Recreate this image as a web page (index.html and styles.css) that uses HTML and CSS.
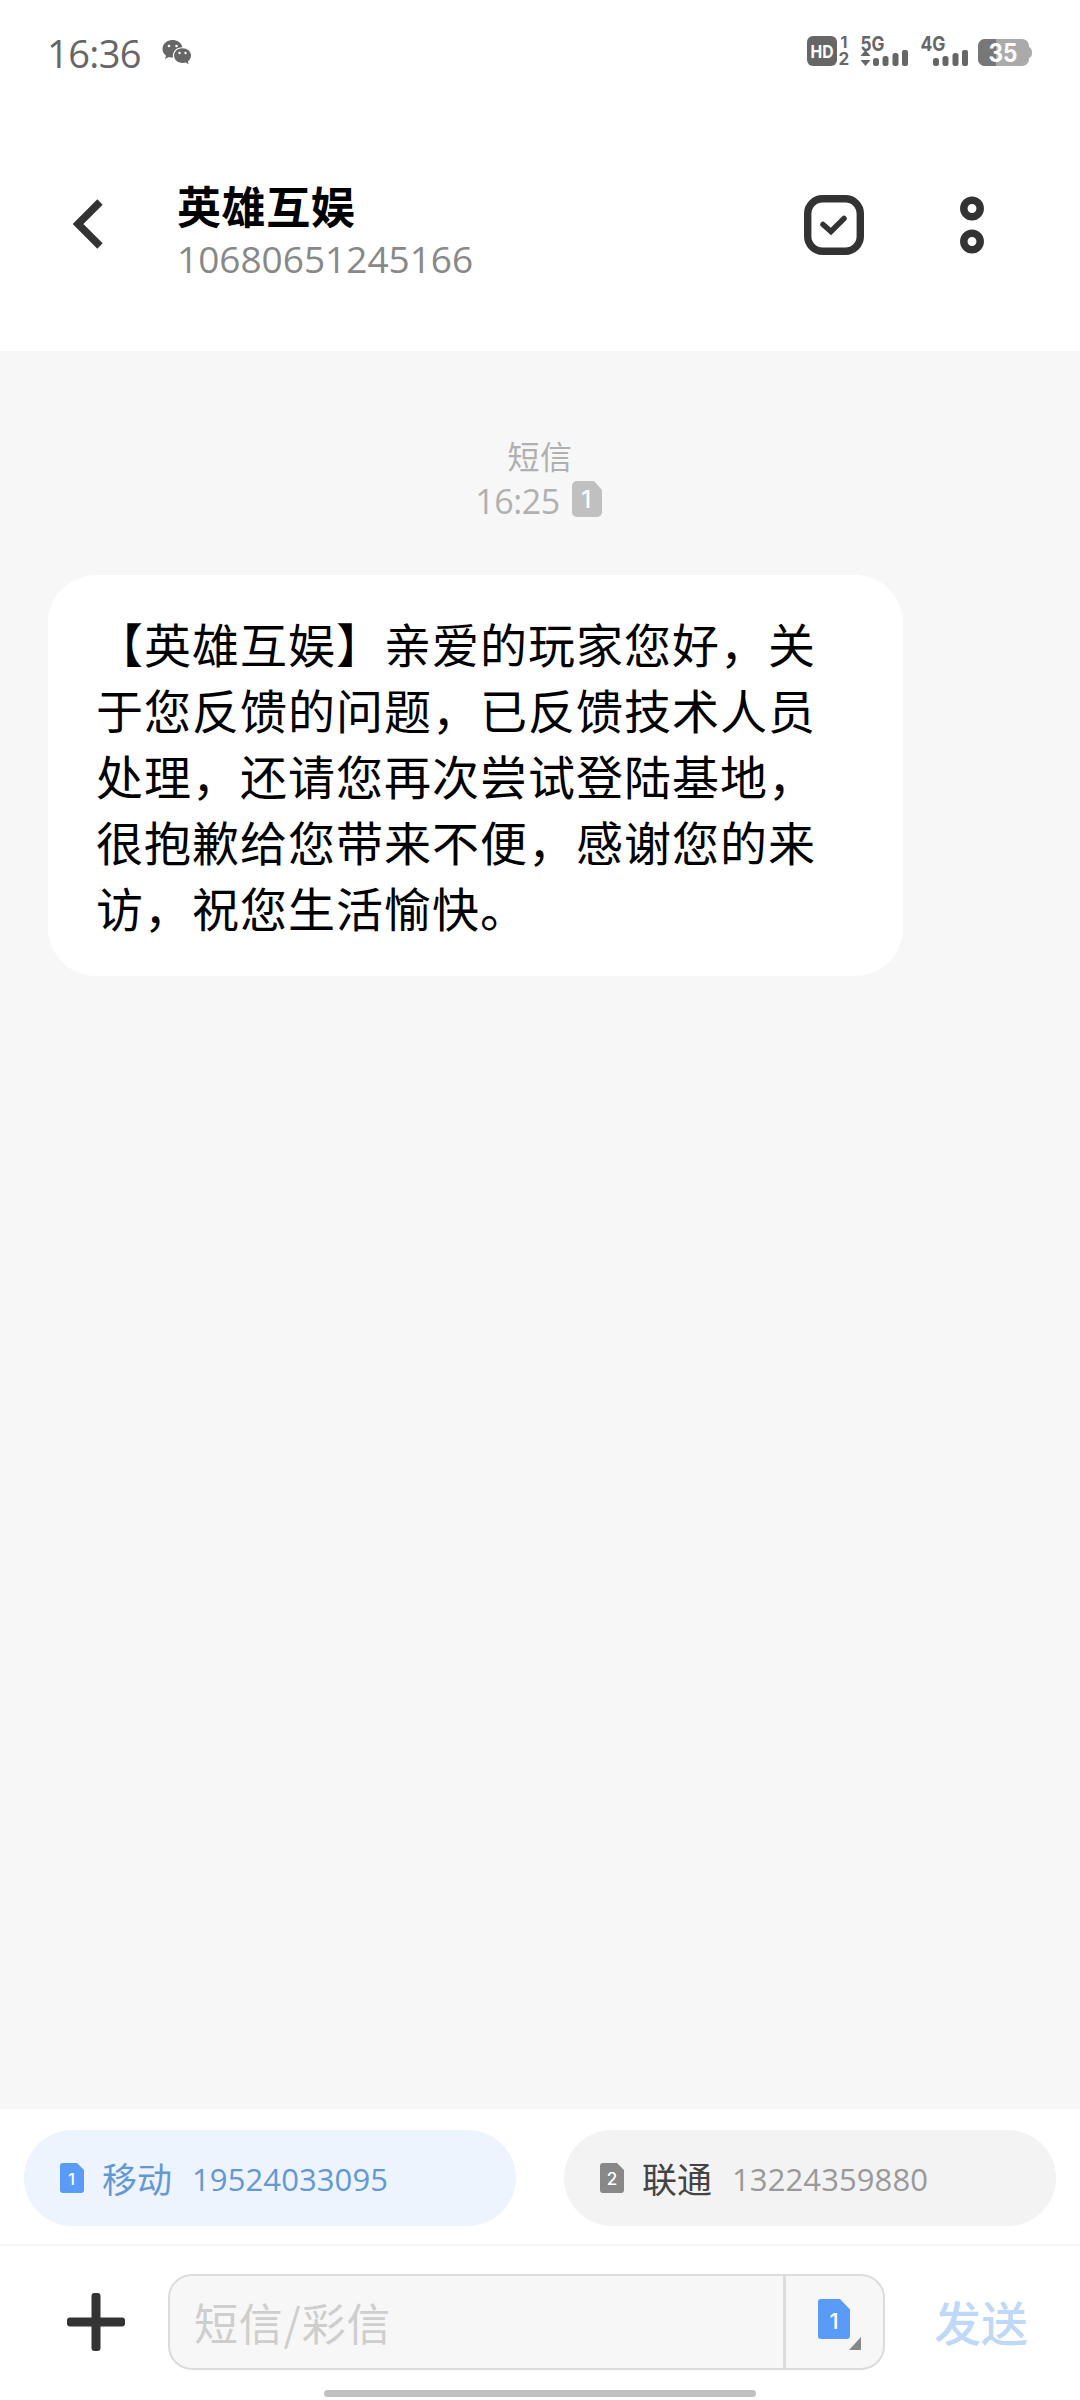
FILE: index.html
```html
<!DOCTYPE html>
<html lang="zh-CN">
<head>
<meta charset="utf-8">
<title>英雄互娱</title>
<link rel="stylesheet" href="styles.css">
</head>
<body>
<div class="screen">
  <div class="status">
    <span class="clock">16:36</span>
    <svg class="wechat" width="30" height="26" viewBox="0 0 30 26">
      <path fill="#666" d="M10.500 1C4.700 1 .5 5 .5 10c0 2.800 1.300 5 3.600 6.700L3 20l4-2a13 13 0 0 0 4 .6C10 12 15 8 20.500 8.200 19 3.500 15 1 10.500 1z"/>
      <path fill="#666" d="M20.500 9.300c-4.900 0-8.400 3.200-8.400 7.300s3.500 7.400 8.400 7.400c1.200 0 2.300-.2 3.200-.5l3 1.800-.8-2.900c2-1.400 3.100-3.500 3.100-5.800 0-4.100-3.600-7.300-8.500-7.300z"/>
      <g fill="#fff"><circle cx="7" cy="7" r="1.300"/><circle cx="14.500" cy="7" r="1.300"/><circle cx="17.500" cy="14" r="1.200"/><circle cx="23.500" cy="14" r="1.200"/></g>
    </svg>
    <svg class="indicators" width="230" height="54" viewBox="0 -10 230 54">
      <g fill="#666">
        <rect x="0" y="1" width="30" height="30" rx="6"/>
        <text class="ind" x="33.500" y="13" font-size="16">1</text>
        <text class="ind" x="31.500" y="30" font-size="17">2</text>
        <text class="ind" x="53.500" y="15.500" font-size="20" textLength="24" lengthAdjust="spacingAndGlyphs">5G</text>
        <path d="M58.500 15l5 6h-10zM58.500 31l5-6h-10z"/>
        <rect x="66" y="23" width="6" height="8" rx="2.500"/><rect x="75.500" y="21" width="6" height="10" rx="2.500"/><rect x="85.500" y="18" width="6" height="13" rx="2.500"/><rect x="95" y="15" width="6" height="16" rx="2"/>
        <text class="ind" x="113.500" y="15.500" font-size="20" textLength="25" lengthAdjust="spacingAndGlyphs">4G</text>
        <rect x="126" y="23" width="6" height="8" rx="2.500"/><rect x="135.500" y="21" width="6" height="10" rx="2.500"/><rect x="145.500" y="18" width="6" height="13" rx="2.500"/><rect x="155" y="15" width="6" height="16" rx="2"/>
      </g>
      <text class="ind" x="3.500" y="22.500" font-size="18" fill="#fff" textLength="23" lengthAdjust="spacingAndGlyphs">HD</text>
      <rect x="171" y="4" width="51" height="27" rx="7" fill="#aaa"/>
      <path d="M178 4h11v27h-11a7 7 0 0 1-7-7V11a7 7 0 0 1 7-7z" fill="#777"/>
      <path d="M222 12q3 1 3 5.500t-3 5.500z" fill="#aaa"/>
      <text class="ind" x="181.500" y="26.500" font-size="25" fill="#fff" textLength="29" lengthAdjust="spacingAndGlyphs">35</text>
    </svg>
  </div>
  <header class="header">
    <svg class="back" width="32" height="50" viewBox="0 0 32 50"><path d="M28 3L6 25l22 22" fill="none" stroke="#333" stroke-width="7.500"/></svg>
    <div class="contact">
      <h1 class="name">英雄互娱</h1>
      <div class="number">10680651245166</div>
    </div>
    <svg class="check" width="60" height="60" viewBox="0 0 60 60" fill="none" stroke="#333">
      <rect x="3.700" y="3.700" width="52.600" height="52.600" rx="15" stroke-width="7.400"/>
      <path d="M19 29.500l8 7 13-13" stroke-width="5.500" stroke-linecap="round"/>
    </svg>
    <svg class="more" width="24" height="58" viewBox="0 0 24 58" fill="none" stroke="#333" stroke-width="7.500"><circle cx="12" cy="12.500" r="8.200"/><circle cx="12" cy="45.500" r="8.200"/></svg>
  </header>
  <main class="thread">
    <div class="kind">短信</div>
    <div class="time"><span class="hour">16:25</span>
      <svg width="30" height="36" viewBox="0 0 30 36"><path d="M5 0h17l8 9v22a5 5 0 0 1-5 5H5a5 5 0 0 1-5-5V5a5 5 0 0 1 5-5z" fill="#c0c0c0"/><text class="sim" x="14" y="26.500" font-size="24">1</text></svg>
    </div>
    <div class="bubble">【英雄互娱】亲爱的玩家您好，关<br>于您反馈的问题，已反馈技术人员<br>处理，还请您再次尝试登陆基地，<br>很抱歉给您带来不便，感谢您的来<br>访，祝您生活愉快。</div>
  </main>
  <div class="sims">
    <div class="chip chip-on">
      <svg width="24" height="30" viewBox="0 0 24 30"><path d="M3 0h14l7 7v20a3 3 0 0 1-3 3H3a3 3 0 0 1-3-3V3a3 3 0 0 1 3-3z" fill="#5a9bf8"/><text class="sim" x="11.500" y="22" font-size="16">1</text></svg>
      <span class="carrier">移动</span><span class="line">19524033095</span>
    </div>
    <div class="chip">
      <svg width="24" height="30" viewBox="0 0 24 30"><path d="M3 0h14l7 7v20a3 3 0 0 1-3 3H3a3 3 0 0 1-3-3V3a3 3 0 0 1 3-3z" fill="#888"/><text class="sim" x="12" y="22" font-size="17">2</text></svg>
      <span class="carrier">联通</span><span class="line">13224359880</span>
    </div>
  </div>
  <footer class="composer">
    <svg class="plus" width="58" height="58" viewBox="0 0 58 58"><path d="M24.500 3a3 3 0 0 1 3-3h3a3 3 0 0 1 3 3v21.500H55a3 3 0 0 1 3 3v3a3 3 0 0 1-3 3H33.500V55a3 3 0 0 1-3 3h-3a3 3 0 0 1-3-3V33.500H3a3 3 0 0 1-3-3v-3a3 3 0 0 1 3-3h21.500z" fill="#333"/></svg>
    <div class="field">
      <div class="hint">短信/彩信</div>
      <div class="picker">
        <svg width="46" height="54" viewBox="0 0 46 54"><path d="M3 0h19l10 10.500V37a3 3 0 0 1-3 3H3a3 3 0 0 1-3-3V3a3 3 0 0 1 3-3z" fill="#5a9bf8"/><text class="sim" x="16" y="29.500" font-size="22">1</text><path d="M43 38v13H31z" fill="#888"/></svg>
      </div>
    </div>
    <div class="send">发送</div>
  </footer>
  <div class="home"><div class="home-bar"></div></div>
</div>
</body>
</html>
```
FILE: styles.css
```css
body { margin: 0; background: #fff; }
.screen {
  width: 1080px; height: 2400px; display: flex; flex-direction: column;
  font-family: "Open Sans", "Noto Sans CJK SC", sans-serif; overflow: hidden;
}
.status { height: 104px; display: flex; align-items: center; padding: 0 43px 0 47px; box-sizing: border-box; }
.clock { font-size: 38px; color: #666; line-height: 104px; width: 94px; letter-spacing: -0.6px; white-space: nowrap; padding-top: 1px; }
.wechat { margin: 0 0 1px 21px; }
.indicators { margin-left: auto; }
.ind { font-family: Inter, sans-serif; font-weight: 700; }
.sim { font-family: Inter, sans-serif; font-weight: 500; fill: #fff; text-anchor: middle; }
.header { height: 247px; display: flex; align-items: flex-start; box-sizing: border-box; padding: 0 96px 0 72px; }
.back { margin-top: 95px; }
.contact { margin: 74px auto 0 73px; }
.name { margin: 0; font-family: "Noto Sans CJK SC", sans-serif; font-size: 44px; letter-spacing: 0.6px; line-height: 54px; font-weight: 700; color: #000; }
.number { font-size: 37px; line-height: 50px; margin-top: 2px; color: #888; }
.check { margin: 91px 96px 0 0; }
.more { margin-top: 92px; }
.thread { flex: 1; background: #f7f7f7; padding: 82px 48px 0; }
.kind { text-align: center; font-size: 32px; letter-spacing: 0.6px; line-height: 48px; color: #b0b0b0; }
.time { display: flex; justify-content: center; align-items: center; gap: 12px; height: 36px; padding-right: 3px; font-size: 34px; letter-spacing: -0.4px; line-height: 38px; color: #b0b0b0; }
.hour { padding-top: 3px; }
.bubble {
  margin-top: 58px; width: 855px; height: 401px; box-sizing: border-box; padding: 35px 48px;
  border-radius: 48px; background: #fff; color: #000; font-family: "Noto Sans CJK SC", sans-serif;
  font-size: 47px; letter-spacing: 1px; line-height: 66px; white-space: nowrap;
}
.sims { height: 137px; box-sizing: border-box; padding: 21px 24px 0; display: grid; grid-template-columns: 1fr 1fr; gap: 48px; border-bottom: 2px solid #f6f6f6; }
.chip { height: 96px; border-radius: 48px; background: #f3f3f3; display: flex; align-items: center; padding-left: 36px; color: #444; }
.carrier { font-family: "Noto Sans CJK SC", sans-serif; font-size: 35px; line-height: 50px; margin-left: 18px; }
.line { font-size: 31px; letter-spacing: 0.1px; margin-left: 20px; padding-top: 1px; color: #999; }
.chip-on { background: #edf4fe; }
.chip-on .carrier, .chip-on .line { color: #6498d4; }
.composer { height: 134px; display: flex; align-items: flex-start; }
.plus { margin: 47px 0 0 67px; }
.field { margin: 28px 0 0 43px; width: 717px; height: 96px; box-sizing: border-box; border: 2px solid #dcdcdc; border-radius: 24px; background: #f7f7f7; display: flex; }
.hint { flex: 1; padding-left: 24px; font-family: "Noto Sans CJK SC", sans-serif; font-size: 44px; letter-spacing: 0.8px; line-height: 92px; color: #cecece; }
.picker { width: 100px; border-left: 3px solid #dcdcdc; padding: 23px 0 0 32px; box-sizing: border-box; }
.send { margin: 42px 0 0 49px; font-size: 47px; line-height: 70px; font-weight: 500; color: #c0d8f8; }
.home { height: 20px; display: flex; justify-content: center; align-items: flex-start; padding-top: 10px; box-sizing: border-box; }
.home-bar { width: 432px; height: 7px; border-radius: 4px; background: #c0c0c0; }
```
